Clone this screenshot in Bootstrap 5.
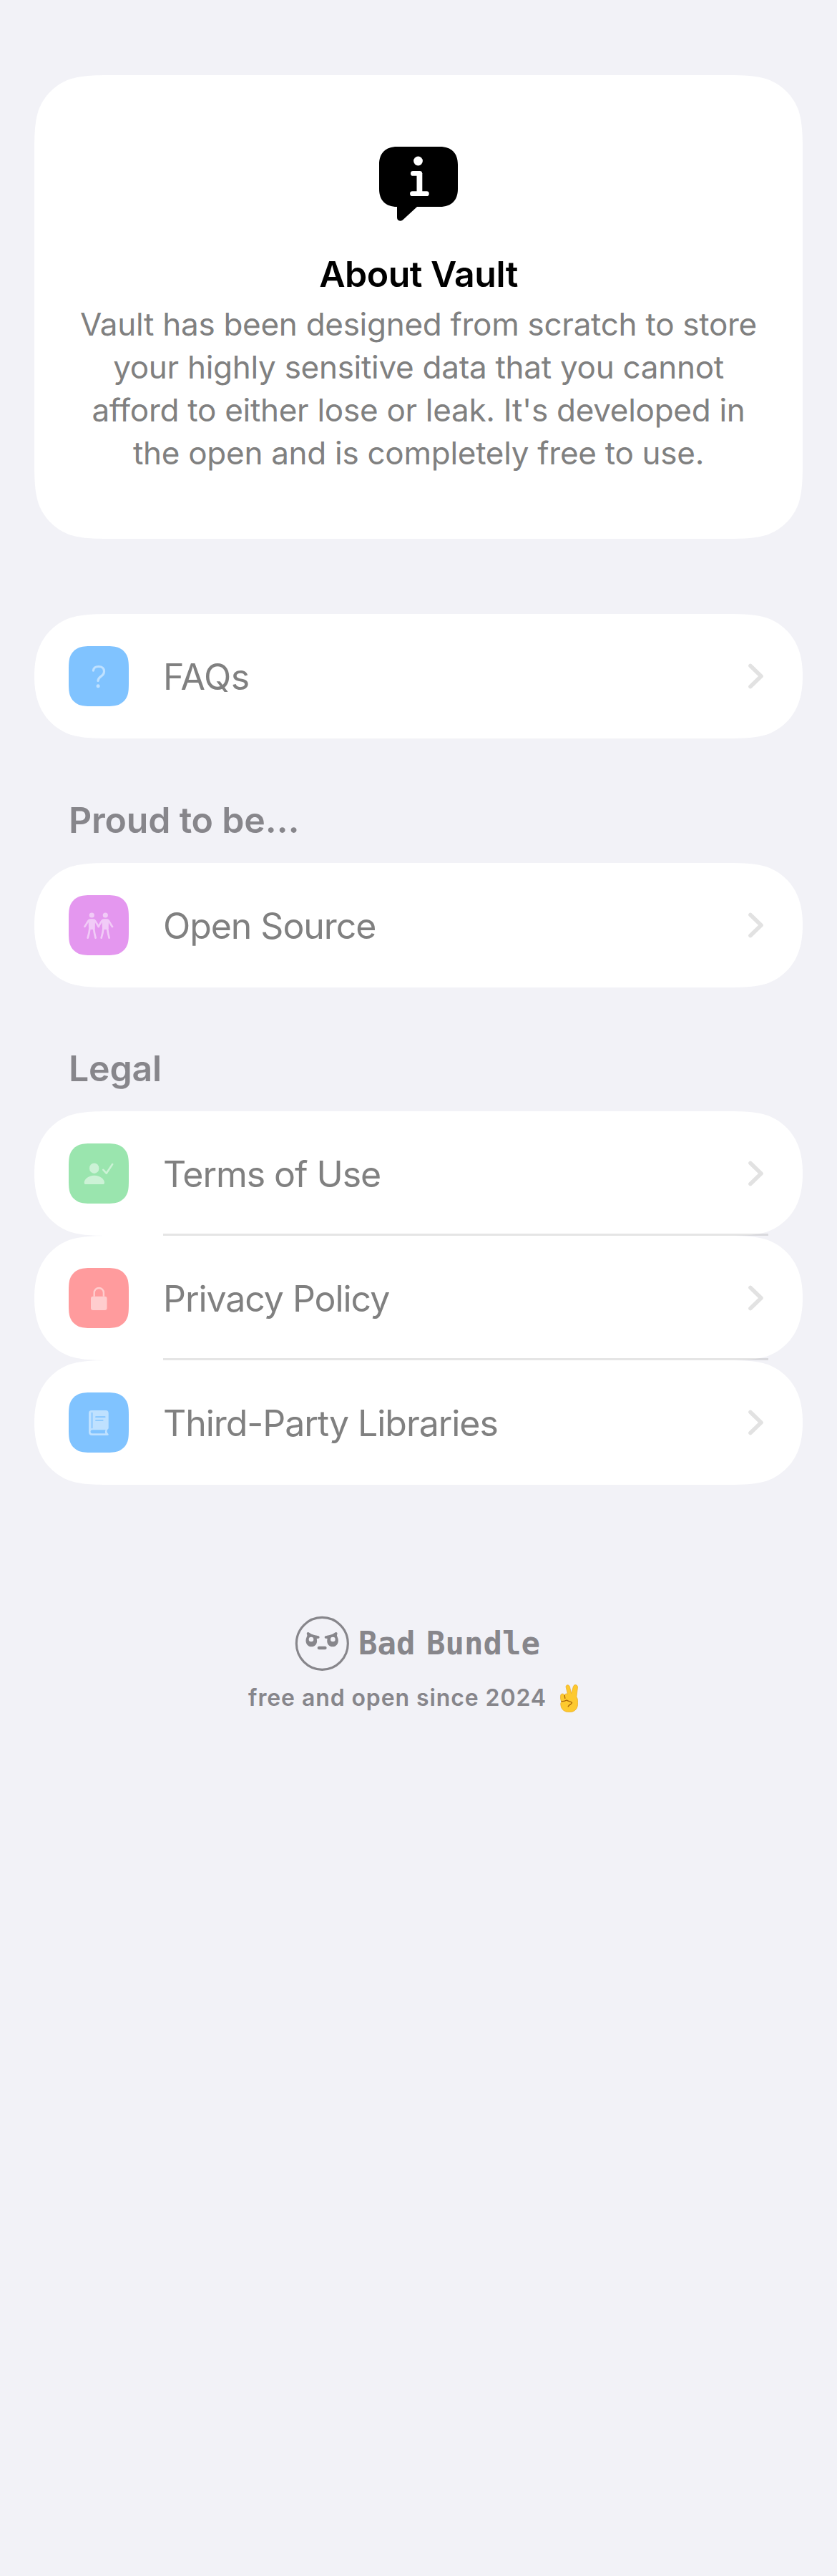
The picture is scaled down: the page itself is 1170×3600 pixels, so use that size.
<!DOCTYPE html>
<html lang="en">
<head>
<meta charset="utf-8">
<meta name="viewport" content="width=device-width, initial-scale=1">
<title>About Vault</title>
<link rel="stylesheet" href="https://cdn.jsdelivr.net/npm/bootstrap@5.3.0/dist/css/bootstrap.min.css">
<style>
body{background:#f2f2f7;font-family:Inter,"Liberation Sans",sans-serif;font-size:50px;line-height:60px;color:gray;min-height:3600px}
.page{padding:105px 48px 0}
.intro{height:648px;padding-top:100px;background:#fff;clip-path:path("M119.2 0L954.8 0C989.1 0 1006.3 0 1024.7 5.8C1044.9 13.2 1060.8 29.1 1068.2 49.3C1074 67.7 1074 84.9 1074 119.2L1074 528.8C1074 563.1 1074 580.3 1068.2 598.7C1060.8 618.9 1044.9 634.8 1024.7 642.2C1006.3 648 989.1 648 954.8 648L119.2 648C84.9 648 67.7 648 49.3 642.2C29.1 634.8 13.2 618.9 5.8 598.7C0 580.3 0 563.1 0 528.8L0 119.2C0 84.9 0 67.7 5.8 49.3C13.2 29.1 29.1 13.2 49.3 5.8C67.7 0 84.9 0 119.2 0Z")}
.intro h1{font-size:50px;line-height:60px;font-weight:600;letter-spacing:-.5px;color:#000;margin:44px 0 10px}
.intro p{font-size:44px;letter-spacing:-.28px}
.entry{height:174px;padding:0 55px 0 48px;color:gray;letter-spacing:-1.05px}
.faq .entry{letter-spacing:-.4px}
.entry::before{content:"";position:absolute;inset:0;z-index:-1;background:#fff;clip-path:path("M119.2 0L954.8 0C989.1 0 1006.3 0 1024.7 5.8C1044.9 13.2 1060.8 29.1 1068.2 49.3C1072 60 1074 72 1074 87C1074 102 1072 114 1068.2 124.7C1060.8 144.9 1044.9 160.8 1024.7 168.2C1006.3 174 989.1 174 954.8 174L119.2 174C84.9 174 67.7 174 49.3 168.2C29.1 160.8 13.2 144.9 5.8 124.7C2 114 0 102 0 87C0 72 2 60 5.8 49.3C13.2 29.1 29.1 13.2 49.3 5.8C67.7 0 84.9 0 119.2 0Z")}
.entry+.entry::after{content:"";position:absolute;left:180px;right:48px;top:-3px;height:3px;background:rgba(0,0,0,.1)}
.entry-label{margin-left:48px;padding-top:1px}
.group-title{font-size:50px;line-height:60px;font-weight:600;letter-spacing:-.2px;color:#87868b;padding:84px 48px 30px;margin:0}
.group-title.legal{padding-top:83px}
.blue{color:#80c3ff}.pink{color:#e497ef}.green{color:#9ae5ae}.red{color:#ff9b9d}
.faq{margin-top:105px}
.foot{margin-top:183px;color:#87868b}
.brand{margin-right:3px}
.brand-name{font:bold 44px/60px "DejaVu Sans Mono",monospace;word-spacing:-11px;margin-left:12px}
.since{font-size:32px;line-height:40px;font-weight:600;letter-spacing:.9px;margin-top:17px}
.since svg{margin:0 15px 0 19px}
</style>
<script src="https://cdn.jsdelivr.net/npm/bootstrap@5.3.0/dist/js/bootstrap.bundle.min.js"></script>
</head>
<body>
<svg class="d-none">
<symbol id="tile" viewBox="0 0 84 84"><path fill="currentColor" d="M36.7 0L47.3 0C57.9 0 63.2 0 68.8 1.8C75.1 4.1 79.9 8.9 82.2 15.2C84 20.8 84 26.1 84 36.7L84 47.3C84 57.9 84 63.2 82.2 68.8C79.9 75.1 75.1 79.9 68.8 82.2C63.2 84 57.9 84 47.3 84L36.7 84C26.1 84 20.8 84 15.2 82.2C8.9 79.9 4.1 75.1 1.8 68.8C0 63.2 0 57.9 0 47.3L0 36.7C0 26.1 0 20.8 1.8 15.2C4.1 8.9 8.9 4.1 15.2 1.8C20.8 0 26.1 0 36.7 0Z"/></symbol>
<symbol id="chev" viewBox="0 0 21 36"><path fill="none" stroke="#e2e2e2" stroke-width="5.6" stroke-linecap="round" stroke-linejoin="round" d="M3 3.500L18 18L3 32.500"/></symbol>
</svg>
<main class="page">
<section class="intro text-center">
<svg class="d-block mx-auto" width="110" height="104" viewBox="0 0 110 104"><path d="M25 0H85C101 0 110 9 110 25V59C110 75 101 84 85 84H53L34 101.500C30 105.500 25 103.500 25 99V84C9 84 0 75 0 59V25C0 9 9 0 25 0Z"/><circle cx="54.500" cy="20" r="6.400" fill="#fff"/><path fill="none" stroke="#fff" stroke-width="6.700" stroke-linecap="round" stroke-linejoin="round" d="M47.300 37.400H56.800M46.400 65.700H66.400"/><path stroke="#fff" stroke-width="7.800" d="M56.400 37V66"/></svg>
<h1>About Vault</h1>
<p class="mb-0">Vault has been designed from scratch to store<br>your highly sensitive data that you cannot<br>afford to either lose or leak. It's developed in<br>the open and is completely free to use.</p>
</section>

<nav class="faq">
<a href="#" class="entry position-relative z-0 d-flex align-items-center text-decoration-none">
<svg class="blue" width="84" height="84"><use href="#tile"/><g opacity=".5"><path fill="none" stroke="#fff" stroke-width="3.200" stroke-linecap="round" d="M34.400 34.200C34.700 30.500 37.500 28.500 41.900 28.500C46.400 28.500 49.500 31 49.500 35.200C49.500 38.500 48 40.300 45.300 42.100C42.200 44.200 41 45.600 41 48.500"/><circle cx="41.100" cy="55.700" r="2.500" fill="#fff"/></g></svg>
<span class="entry-label me-auto">FAQs</span><svg width="21" height="36"><use href="#chev"/></svg></a>
</nav>

<h2 class="group-title">Proud to be…</h2>
<nav>
<a href="#" class="entry position-relative z-0 d-flex align-items-center text-decoration-none">
<svg class="pink" width="84" height="84"><use href="#tile"/><g opacity=".5" fill="#fff" stroke="#fff" stroke-linecap="round" stroke-linejoin="round"><g id="walker"><circle cx="32.300" cy="28" r="3.600" stroke="none"/><path stroke="none" d="M27.500 34.500C29 32.800 35.500 32.800 37 34.500L36.700 47L34 48H30.700L28 47Z"/><path fill="none" stroke-width="2.700" d="M29 34.800C26.500 36 24.800 41 22.400 43.800M35.500 34.800C38 36 39.600 41.500 42 44M29.500 46C29 51 28 55.500 26.700 59.600M35 46C35.600 51 36.500 55.500 37.600 59.600"/></g><use href="#walker" x="19"/></g></svg>
<span class="entry-label me-auto">Open Source</span><svg width="21" height="36"><use href="#chev"/></svg></a>
</nav>

<h2 class="group-title legal">Legal</h2>
<nav>
<a href="#" class="entry position-relative z-0 d-flex align-items-center text-decoration-none">
<svg class="green" width="84" height="84"><use href="#tile"/><g opacity=".5" fill="#fff"><ellipse cx="35.700" cy="34.700" rx="6.700" ry="7.300"/><path d="M24 57C22.400 57 21.700 56.200 21.700 54.700C21.700 50 27.500 44.700 35.800 44.700C44.200 44.700 50 50 50 54.700C50 56.200 49.200 57 47.700 57Z"/><path fill="none" stroke="#fff" stroke-width="2.500" stroke-linecap="round" stroke-linejoin="round" d="M48.300 36.800L52.700 41.700L61.200 29"/></g></svg>
<span class="entry-label me-auto">Terms of Use</span><svg width="21" height="36"><use href="#chev"/></svg></a>
<a href="#" class="entry position-relative z-0 d-flex align-items-center text-decoration-none">
<svg class="red" width="84" height="84"><use href="#tile"/><g opacity=".5"><rect x="31" y="39.700" width="22.500" height="19.300" rx="3" fill="#fff"/><path fill="none" stroke="#fff" stroke-width="2.400" d="M35.700 39.700V34.600A6.600 6.600 0 0 1 48.900 34.600V39.700"/></g></svg>
<span class="entry-label me-auto">Privacy Policy</span><svg width="21" height="36"><use href="#chev"/></svg></a>
<a href="#" class="entry position-relative z-0 d-flex align-items-center text-decoration-none">
<svg class="blue" width="84" height="84"><use href="#tile"/><path fill="#bfe1ff" d="M32 25H52C54.500 25 55.700 26.200 55.700 28.700V49.500C55.700 51.500 53.500 51.500 53.500 54C53.500 57 55.900 57.500 55.700 59C55.600 59.800 55 60 54 60H32.500C29.500 60 28 58 28 55.500V29C28 26.300 29.300 25 32 25Z"/><path fill="none" stroke="currentColor" stroke-linecap="round" stroke-width="1.700" d="M32.600 28.500V49.500M38 34.200H50.700M38 39H47.700"/><path fill="currentColor" d="M33 52.300H51.700C50.700 54 50.700 55.600 51.300 57.300H33C29.800 57.300 29.800 52.300 33 52.300Z"/></svg>
<span class="entry-label me-auto">Third-Party Libraries</span><svg width="21" height="36"><use href="#chev"/></svg></a>
</nav>

<footer class="foot d-flex flex-column align-items-center">
<div class="brand d-flex align-items-center">
<svg width="77" height="78" viewBox="34 24 231 234"><ellipse cx="149" cy="140.500" rx="108" ry="109.500" fill="none" stroke="currentColor" stroke-width="9.500"/><g fill="currentColor"><path id="eye" fill-rule="evenodd" d="M84 113C86 109 87 107 85 102C82 95 89 90 95 95C107 105 121 105 134 109C139 111 139 118 134 119L126 120C131 139 121 154 104 154C84 154 75 132 84 113ZM103 113A10 10 0 1 0 103 133A10 10 0 1 0 103 113Z"/><use href="#eye" transform="translate(297 0) scale(-1 1)"/><rect x="129" y="152" width="39" height="14" rx="7"/></g></svg>
<span class="brand-name">Bad Bundle</span></div>
<div class="since d-flex align-items-center"><span>free and open since 2024</span>
<svg width="25" height="39" viewBox="0 0 74 117" role="img" aria-label="Victory hand"><path fill="#fdc92f" stroke="#e9a820" stroke-width="2" d="M24 12C22 0 37 -1 40 10L46 38L55 8C58 -2 73 0 73 12L68 52C74 60 74 72 73 86C71 106 57 116 38 116C18 116 4 106 2 86C1 80 2 76 6 72C0 68 0 46 3 42C8 37 15 39 18 45C21 38 27 37 31 41Z"/><path fill="none" stroke="#a86309" stroke-width="4" stroke-linecap="round" d="M5 70C14 72 20 70 27 66C34 72 44 70 49 77C47 84 38 83 33 93M18 46L20 58"/></svg></div>
</footer>
</main>
</body>
</html>
